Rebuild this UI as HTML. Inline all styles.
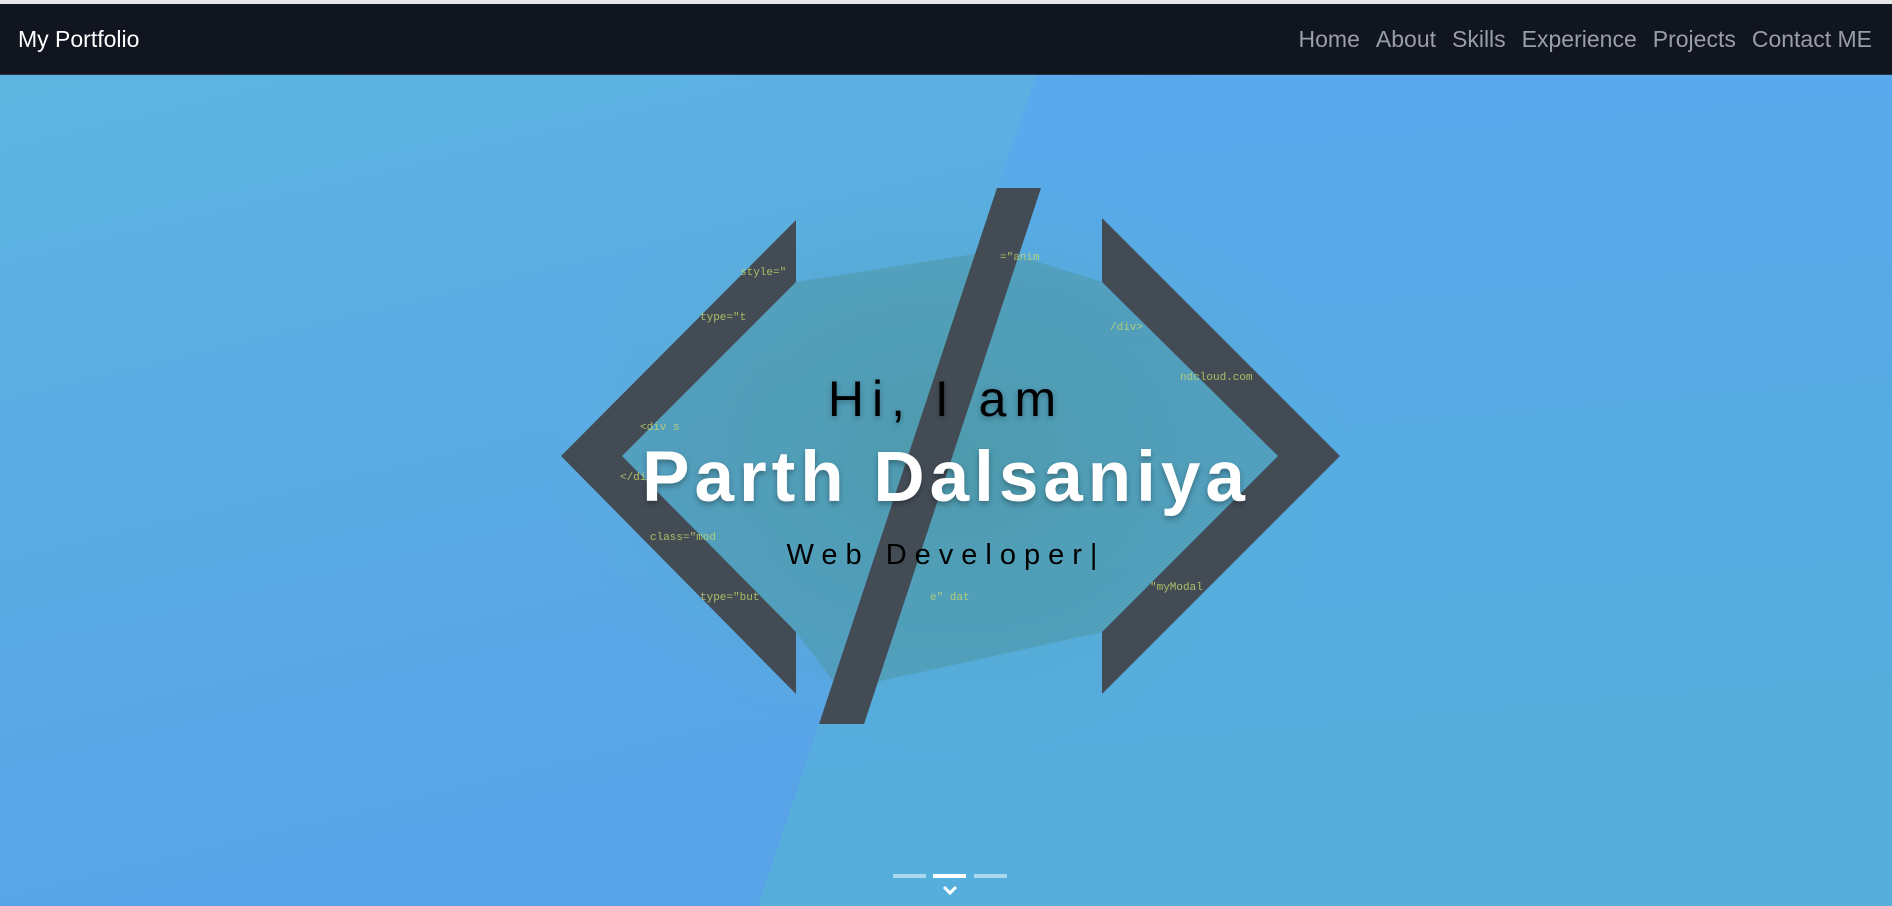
<!DOCTYPE html>
<html><head><meta charset="utf-8"><style>
html,body{margin:0;padding:0;width:1892px;height:906px;overflow:hidden;font-family:"Liberation Sans",sans-serif}
.top{position:absolute;left:0;top:0;width:1892px;height:4px;background:#e6e6e6}
nav{position:absolute;left:0;top:4px;width:1892px;height:70px;background:#11151f;border-bottom:1px solid #2a3446}
.brand{position:absolute;left:18px;top:22px;color:#fff;font-size:23px}
.links{position:absolute;right:20px;top:22px;color:#9a9ea6;font-size:23px}
.links span{margin-left:16px}
.hero{position:absolute;left:0;top:75px;width:1892px;height:831px}
.t{position:absolute;left:0;width:1892px;text-align:center}
</style></head><body>
<div class="top"></div>
<div class="hero">
<svg width="1892" height="831" viewBox="0 75 1892 831" style="position:absolute;left:0;top:0">
<defs>
<linearGradient id="l" x1="0" y1="0" x2="0.3" y2="1"><stop offset="0" stop-color="#5db5e0"/><stop offset="1" stop-color="#58a3e8"/></linearGradient>
<linearGradient id="r" x1="0" y1="0" x2="0.2" y2="1"><stop offset="0" stop-color="#5aa8f0"/><stop offset="1" stop-color="#55aedb"/></linearGradient>
<radialGradient id="g" cx="0.5" cy="0.5" r="0.5"><stop offset="0" stop-color="#4e9cae" stop-opacity="0.9"/><stop offset="1" stop-color="#55b0cc" stop-opacity="0"/></radialGradient>
</defs>
<rect x="0" y="75" width="1892" height="831" fill="url(#r)"/>
<polygon points="0,75 1036,75 758,906 0,906" fill="url(#l)"/>
<ellipse cx="950" cy="456" rx="400" ry="300" fill="url(#g)"/>
<polygon points="622,456 796,282 1000,250 1102,282 1278,456 1102,632 840,690 796,632" fill="#4f97a8" opacity="0.6"/>
<polygon points="796,220 561,456 796,694 796,632 622,456 796,282" fill="#434c55"/>
<polygon points="1102,218 1340,456 1102,694 1102,632 1278,456 1102,282" fill="#434c55"/>
<polygon points="997,188 1041,188 864,724 819,724" fill="#434c55"/>
<g font-family="Liberation Mono,monospace" font-size="11" fill="#c9d86a" opacity="0.8">
<text x="740" y="275">style="</text><text x="700" y="320">type="t</text><text x="640" y="430">&lt;div s</text>
<text x="620" y="480">&lt;/div&gt;</text><text x="650" y="540">class="mod</text><text x="700" y="600">type="but</text>
<text x="1000" y="260">="anim</text><text x="1110" y="330">/div&gt;</text><text x="1180" y="380">ndcloud.com</text>
<text x="1150" y="590">"myModal</text><text x="930" y="600">e" dat</text>
</g>
<g fill="rgba(255,255,255,0.5)"><rect x="893" y="874" width="33" height="4"/><rect x="974" y="874" width="33" height="4"/></g>
<rect x="933" y="874" width="33" height="4" fill="#fff"/>
<path d="M944 887 l6 6 l6 -6" stroke="#fff" stroke-width="3" fill="none"/>
</svg>
<div class="t" style="top:295px;font-size:50px;letter-spacing:8px;color:#000;text-shadow:0 2px 6px rgba(0,0,0,.3)">Hi, I am</div>
<div class="t" style="top:362px;font-size:71px;font-weight:bold;letter-spacing:5px;color:#fff;text-shadow:0 3px 6px rgba(0,0,0,.3)">Parth Dalsaniya</div>
<div class="t" style="top:464px;font-size:29px;letter-spacing:8px;color:#000">Web Developer|</div>
</div>
<nav><div class="brand">My Portfolio</div>
<div class="links"><span>Home</span><span>About</span><span>Skills</span><span>Experience</span><span>Projects</span><span>Contact ME</span></div></nav>
</body></html>
